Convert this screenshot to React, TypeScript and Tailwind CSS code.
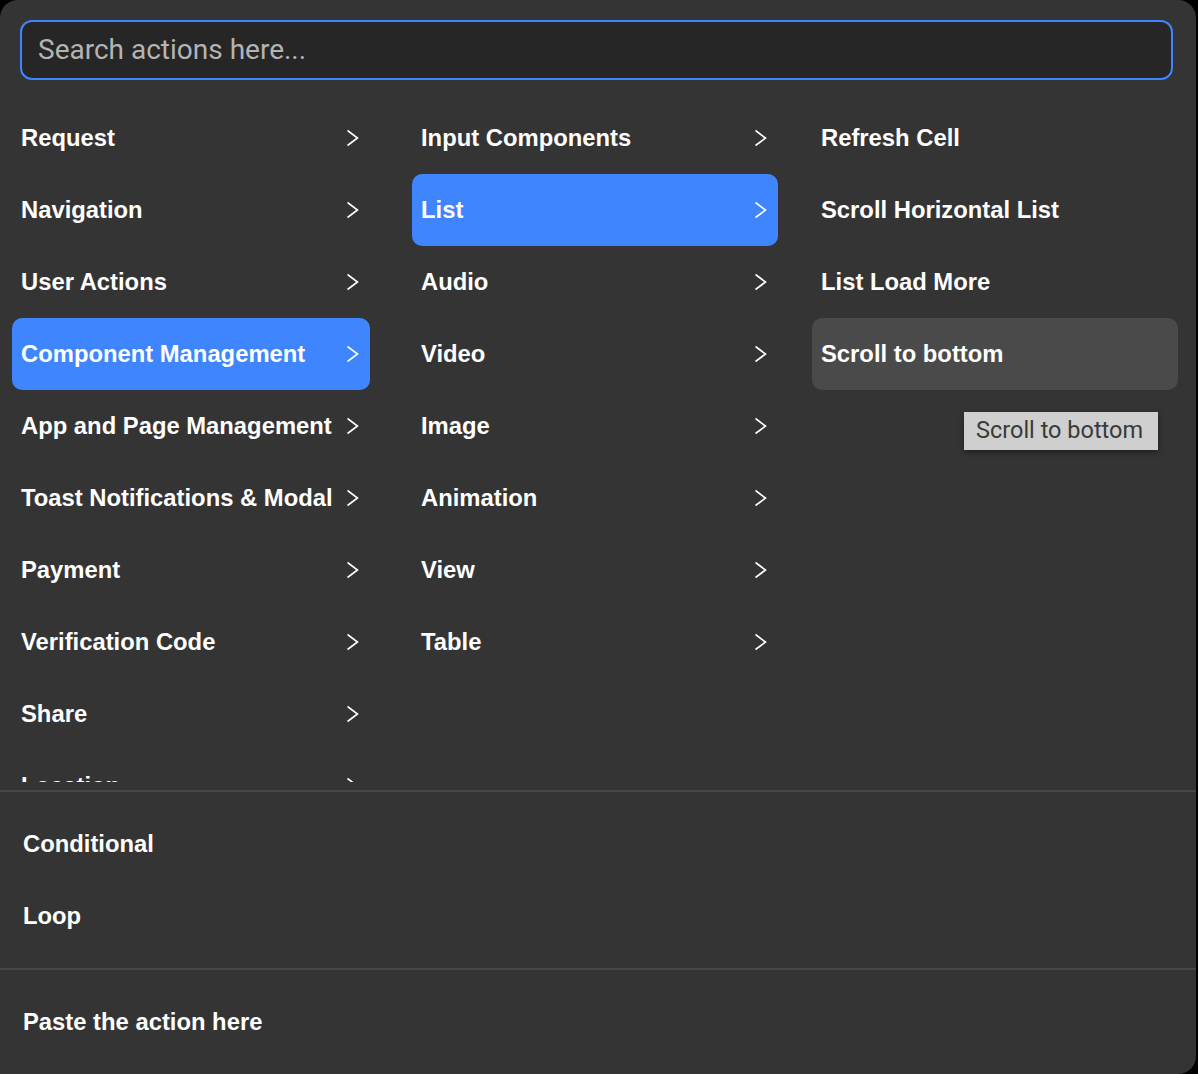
import { ReactNode } from 'react';

const leftItems = [
  'Request',
  'Navigation',
  'User Actions',
  'Component Management',
  'App and Page Management',
  'Toast Notifications & Modal',
  'Payment',
  'Verification Code',
  'Share',
  'Location',
];

const middleItems = ['Input Components', 'List', 'Audio', 'Video', 'Image', 'Animation', 'View', 'Table'];

const rightItems = ['Refresh Cell', 'Scroll Horizontal List', 'List Load More', 'Scroll to bottom'];

function Chevron() {
  return (
    <svg width="13" height="18" viewBox="0 0 13 18" fill="none" className="shrink-0">
      <polyline points="1.5,1.5 11.5,9 1.5,16.5" stroke="white" strokeWidth="1.6" strokeLinejoin="miter" />
    </svg>
  );
}

type RowProps = {
  label: string;
  arrow?: boolean;
  tone?: 'active' | 'hover' | 'none';
};

function Row({ label, arrow, tone = 'none' }: RowProps) {
  const bg = tone === 'active' ? 'bg-[#3f85fe]' : tone === 'hover' ? 'bg-[#4a4a4a]' : '';
  return (
    <div className={`flex h-[72px] shrink-0 items-center justify-between rounded-[10px] pl-[9px] pr-[11px] ${bg}`}>
      <span className="whitespace-nowrap text-[23.8px] font-bold text-white">{label}</span>
      {arrow && <Chevron />}
    </div>
  );
}

function Section({ children }: { children: ReactNode }) {
  return <div className="flex flex-col border-t-2 border-[#474747] px-[14px] py-4">{children}</div>;
}

export default function App() {
  return (
    <div className="min-h-[1074px] bg-black font-['Liberation_Sans',Arial,sans-serif]">
      <div className="relative h-[1074px] w-[1196px] overflow-hidden rounded-tl-[18px] rounded-tr-[18px] rounded-br-[18px] bg-[#343434]">
        {/* Search */}
        <div className="pl-5 pr-[23px] pt-5">
          <div className="flex h-[60px] items-center rounded-[12px] border-2 border-[#3f85fe] bg-[#262626] px-4">
            <span className="font-['Roboto',sans-serif] text-[28px] text-[#b4b4b4]">Search actions here...</span>
          </div>
        </div>

        {/* Columns */}
        <div className="mt-[22px] flex h-[680px] overflow-hidden pl-3">
          <div className="flex w-[358px] flex-col">
            {leftItems.map((item) => (
              <Row key={item} label={item} arrow tone={item === 'Component Management' ? 'active' : 'none'} />
            ))}
          </div>
          <div className="ml-[42px] flex w-[366px] flex-col">
            {middleItems.map((item) => (
              <Row key={item} label={item} arrow tone={item === 'List' ? 'active' : 'none'} />
            ))}
          </div>
          <div className="ml-[34px] flex w-[366px] flex-col">
            {rightItems.map((item) => (
              <Row key={item} label={item} tone={item === 'Scroll to bottom' ? 'hover' : 'none'} />
            ))}
          </div>
        </div>

        <div className="h-2" />

        <Section>
          <Row label="Conditional" />
          <Row label="Loop" />
        </Section>
        <Section>
          <Row label="Paste the action here" />
        </Section>

        {/* Tooltip */}
        <div className="absolute left-[964px] top-[412px] flex h-[38px] w-[194px] items-center bg-[#cfcfcf] pl-3 font-['Roboto',sans-serif] text-[23.5px] text-[#3a3a3a] shadow-[0_2px_6px_rgba(0,0,0,0.45)]">
          Scroll to bottom
        </div>
      </div>
    </div>
  );
}
